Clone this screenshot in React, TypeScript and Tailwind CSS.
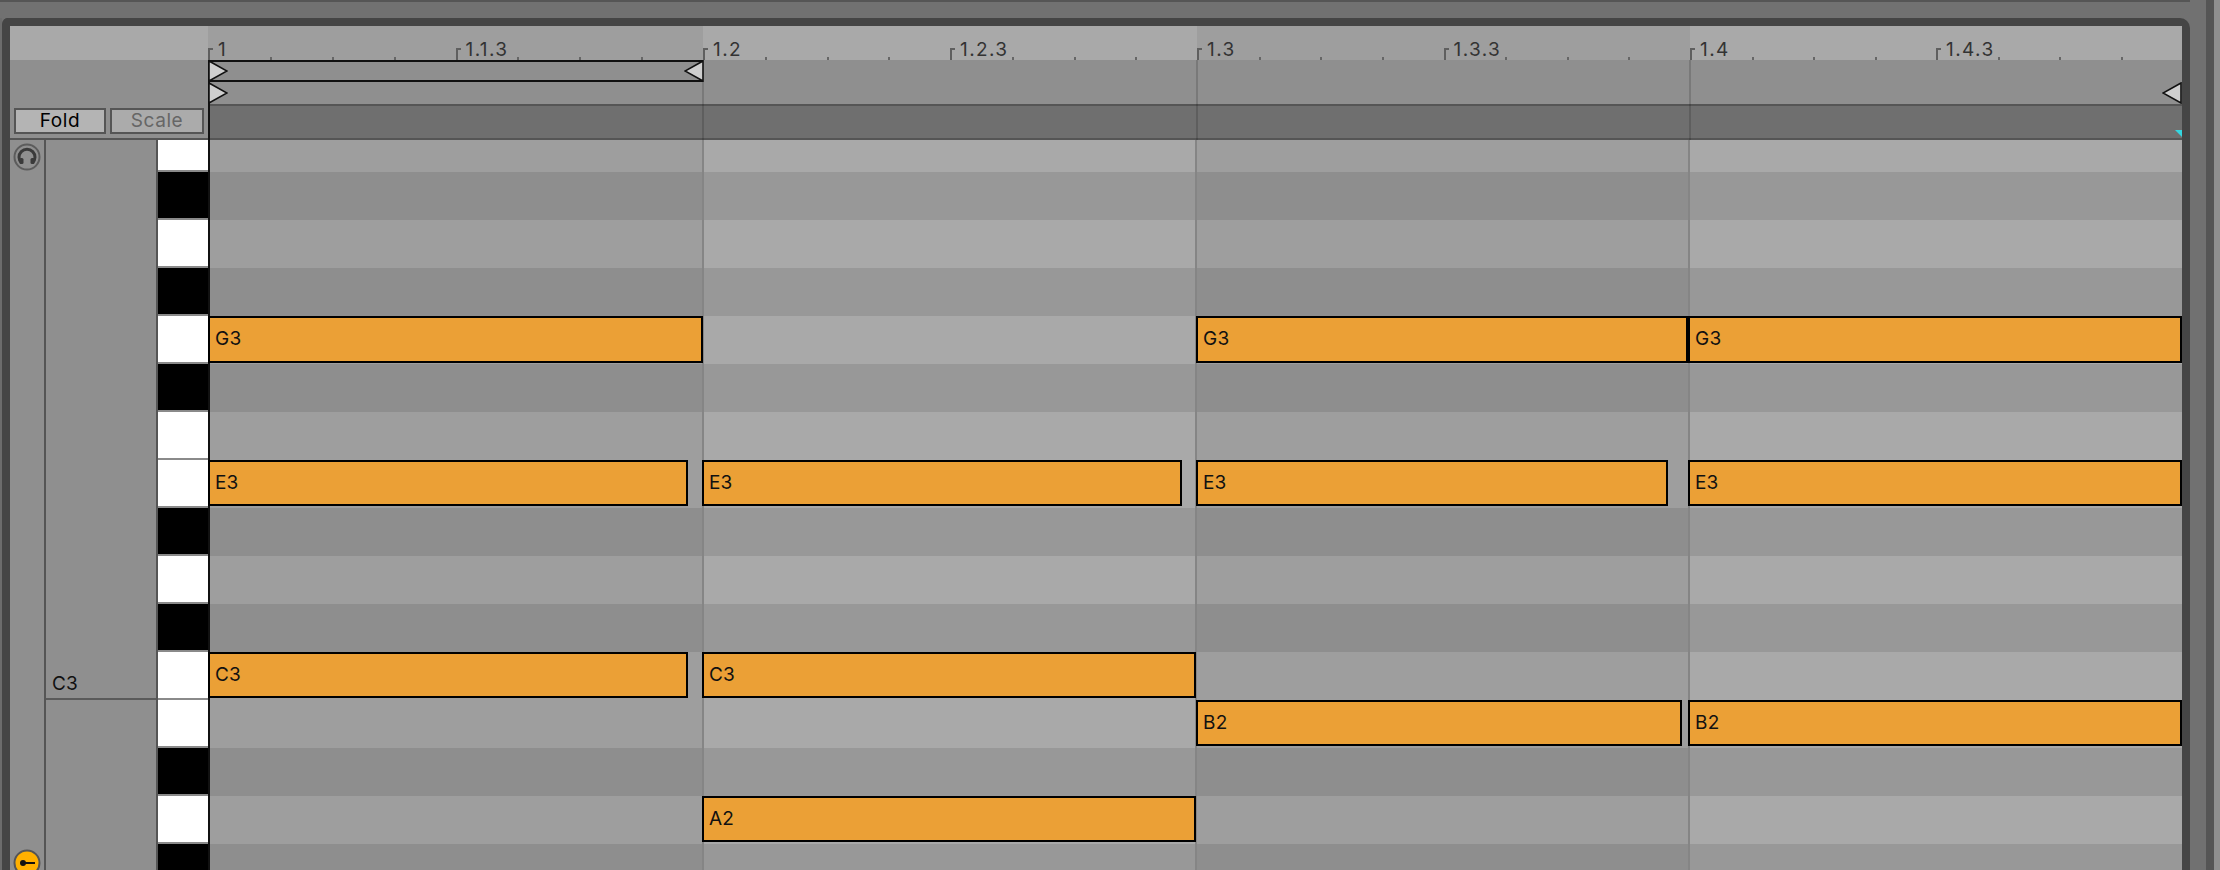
const FONT = "font-['Inter','Liberation_Sans',sans-serif]";

const BARS = [
  { w: "w-[495px]", dim: true, label: "1", sub: "1.1.3" },
  { w: "w-[494px]", dim: false, label: "1.2", sub: "1.2.3" },
  { w: "w-[493px]", dim: true, label: "1.3", sub: "1.3.3" },
  { w: "w-[492px]", dim: false, label: "1.4", sub: "1.4.3" },
];

// top row is cut off, last one too
const ROWS = [
  { h: "h-[32px]", black: false },
  { h: "h-[48px]", black: true },
  { h: "h-[48px]", black: false },
  { h: "h-[48px]", black: true },
  { h: "h-[48px]", black: false },
  { h: "h-[48px]", black: true },
  { h: "h-[48px]", black: false },
  { h: "h-[48px]", black: false },
  { h: "h-[48px]", black: true },
  { h: "h-[48px]", black: false },
  { h: "h-[48px]", black: true },
  { h: "h-[48px]", black: false },
  { h: "h-[48px]", black: false },
  { h: "h-[48px]", black: true },
  { h: "h-[48px]", black: false },
  { h: "h-[48px]", black: true },
];

// offsets inside the grid, which starts at x=208, y=140
const NOTES = [
  { name: "G3", cls: "left-[0px] top-[176px] w-[495px] h-[47px] pl-[5px]" },
  { name: "G3", cls: "left-[988px] top-[176px] w-[492px] h-[47px] pl-[5px]" },
  { name: "G3", cls: "left-[1478px] top-[176px] w-[496px] h-[47px] border-l-[4px] pl-[5px]" },
  { name: "E3", cls: "left-[0px] top-[320px] w-[480px] h-[46px] pl-[5px]" },
  { name: "E3", cls: "left-[494px] top-[320px] w-[480px] h-[46px] pl-[5px]" },
  { name: "E3", cls: "left-[988px] top-[320px] w-[472px] h-[46px] pl-[5px]" },
  { name: "E3", cls: "left-[1480px] top-[320px] w-[494px] h-[46px] pl-[5px]" },
  { name: "C3", cls: "left-[0px] top-[512px] w-[480px] h-[46px] pl-[5px]" },
  { name: "C3", cls: "left-[494px] top-[512px] w-[494px] h-[46px] pl-[5px]" },
  { name: "B2", cls: "left-[988px] top-[560px] w-[486px] h-[46px] pl-[5px]" },
  { name: "B2", cls: "left-[1480px] top-[560px] w-[494px] h-[46px] pl-[5px]" },
  { name: "A2", cls: "left-[494px] top-[656px] w-[494px] h-[46px] pl-[5px]" },
];

function Marker({ cls, flip }: { cls: string; flip?: boolean }) {
  return (
    <svg className={`absolute ${cls}`} width="20" height="22" viewBox="0 0 20 22">
      <polygon
        points={flip ? "19,1 1,11 19,21" : "1,1 19,11 1,21"}
        fill="#cfcfcf"
        stroke="#111"
        strokeWidth="1.6"
      />
    </svg>
  );
}

function RulerBar({ bar }: { bar: (typeof BARS)[number] }) {
  return (
    <div className={`flex h-full ${bar.w} ${bar.dim ? "bg-[#9e9e9e]" : "bg-[#a9a9a9]"}`}>
      {[0, 1, 2, 3, 4, 5, 6, 7].map((i) =>
        i === 0 || i === 4 ? (
          <div key={i} className="flex-1 flex items-end">
            <div className="w-[5px] h-[12px] border-l-2 border-t-2 border-[#5f5f5f]" />
            <span className="text-[19px] leading-[21px] tracking-[1.4px] text-[#333] ml-[5px] whitespace-nowrap">
              {i === 0 ? bar.label : bar.sub}
            </span>
          </div>
        ) : (
          <div key={i} className="flex-1 flex items-end">
            <div className="w-[2px] h-[3px] bg-[#666]" />
          </div>
        ),
      )}
    </div>
  );
}

function HeadphoneIcon() {
  return (
    <svg width="28" height="28" viewBox="0 0 28 28">
      <circle cx="14" cy="14" r="12.5" fill="#8f8f8f" stroke="#5c5c5c" strokeWidth="2" />
      <path d="M8.5 20 A8 8 0 1 1 19.5 20" fill="none" stroke="#3a3a3a" strokeWidth="3" />
      <rect x="6.5" y="15" width="4" height="6" rx="1.5" fill="#3a3a3a" />
      <rect x="17.5" y="15" width="4" height="6" rx="1.5" fill="#3a3a3a" />
    </svg>
  );
}

function KeyIcon() {
  return (
    <svg width="28" height="28" viewBox="0 0 28 28">
      <circle cx="14" cy="14" r="12.5" fill="#ffb000" stroke="#555" strokeWidth="2" />
      <circle cx="10" cy="14" r="3" fill="#111" />
      <rect x="10" y="13" width="12" height="2" fill="#111" />
    </svg>
  );
}

export default function App() {
  return (
    <div className={`w-[2220px] h-[870px] overflow-hidden bg-[#717171] flex ${FONT}`}>
      <div className="w-[2190px] shrink-0 flex flex-col">
        <div className="h-[18px] shrink-0 border-t-2 border-[#555]" />
        <div className="flex flex-1 min-h-0">
          <div className="w-[2px] shrink-0 bg-[#6c6c6c]" />
          <div className="w-[2188px] shrink-0 border-l-8 border-t-8 border-r-8 border-[#454545] rounded-tl-[6px] rounded-tr-[10px] flex flex-col">
            {/* ruler */}
            <div className="flex h-[34px] shrink-0">
              <div className="w-[198px] bg-[#a9a9a9]" />
              {BARS.map((b) => (
                <RulerBar key={b.label} bar={b} />
              ))}
            </div>

            {/* loop braces + fold header */}
            <div className="flex h-[80px] shrink-0">
              <div className="w-[198px] bg-[#8f8f8f] border-b-2 border-[#555] flex items-start gap-1 pt-[48px] pl-1">
                <button className="w-[92px] h-[26px] border-2 border-[#555] bg-[#b4b4b4] text-[19px] leading-[20px] text-black tracking-[0.6px]">
                  Fold
                </button>
                <button className="w-[94px] h-[26px] border-2 border-[#555] bg-[#ababab] text-[19px] leading-[20px] text-[#666] tracking-[0.6px]">
                  Scale
                </button>
              </div>
              <div className="flex-1 flex flex-col relative">
                <div className="h-[46px] bg-[#8f8f8f] border-b-2 border-[#555]" />
                <div className="h-[34px] bg-[#6f6f6f] border-b-2 border-[#555]" />
                <div className="absolute left-0 top-0 w-[495px] h-[22px] border-y-2 border-[#111]" />
                <div className="absolute left-0 top-0 bottom-0 w-[2px] bg-[#111]" />
                <div className="absolute left-[494px] top-[22px] bottom-0 w-[2px] bg-black/15" />
                <div className="absolute left-[988px] top-0 bottom-0 w-[2px] bg-black/15" />
                <div className="absolute left-[1481px] top-0 bottom-0 w-[2px] bg-black/15" />
                <Marker cls="left-0 top-0" />
                <Marker cls="left-0 top-[22px]" />
                <Marker cls="left-[476px] top-0" flip />
                <Marker cls="right-0 top-[22px]" flip />
                <div className="absolute right-0 top-[70px] w-0 h-0 border-l-[7px] border-l-transparent border-t-[7px] border-t-[#35d6e0]" />
              </div>
            </div>

            {/* piano roll */}
            <div className="flex flex-1 min-h-0">
              <div className="w-[36px] shrink-0 bg-[#8f8f8f] border-r-2 border-[#555] relative">
                <div className="absolute top-[3px] left-[3px]">
                  <HeadphoneIcon />
                </div>
                <div className="absolute top-[709px] left-[3px]">
                  <KeyIcon />
                </div>
              </div>
              <div className="w-[112px] shrink-0 bg-[#8f8f8f] border-r-2 border-[#555] flex flex-col">
                <div className="h-[560px] shrink-0 border-b-2 border-[#5a5a5a] flex items-end pl-[6px] pb-[3px] text-[19px] leading-[22px] text-[#111]">
                  C3
                </div>
              </div>
              <div className="w-[50px] shrink-0 flex flex-col bg-[#8f8f8f]">
                {ROWS.map((r, i) => (
                  <div key={i} className={`${r.h} shrink-0 border-b-2 border-[#8a8a8a] ${r.black ? "bg-black" : "bg-white"}`} />
                ))}
              </div>
              <div className="flex-1 relative border-l-2 border-[#111] min-w-0">
                <div className="flex flex-col">
                  {ROWS.map((r, i) => (
                    <div key={i} className={`${r.h} shrink-0 flex`}>
                      <div className={`w-[494px] border-r-2 border-[#858585] ${r.black ? "bg-[#8e8e8e]" : "bg-[#9e9e9e]"}`} />
                      <div className={`w-[493px] border-r-2 border-[#858585] ${r.black ? "bg-[#989898]" : "bg-[#a9a9a9]"}`} />
                      <div className={`w-[493px] border-r-2 border-[#858585] ${r.black ? "bg-[#8e8e8e]" : "bg-[#9e9e9e]"}`} />
                      <div className={`flex-1 ${r.black ? "bg-[#989898]" : "bg-[#a9a9a9]"}`} />
                    </div>
                  ))}
                </div>
                {NOTES.map((n, i) => (
                  <div
                    key={i}
                    className={`absolute ${n.cls} -translate-x-[2px] bg-[#eba036] border-2 border-black flex items-center text-[19px] tracking-[0.2px] text-[#111]`}
                  >
                    {n.name}
                  </div>
                ))}
              </div>
            </div>
          </div>
        </div>
      </div>
      <div className="w-[16px] shrink-0 bg-[#717171]" />
      <div className="w-[8px] shrink-0 bg-[#555]" />
      <div className="w-[6px] shrink-0 bg-[#8f8f8f]" />
    </div>
  );
}
